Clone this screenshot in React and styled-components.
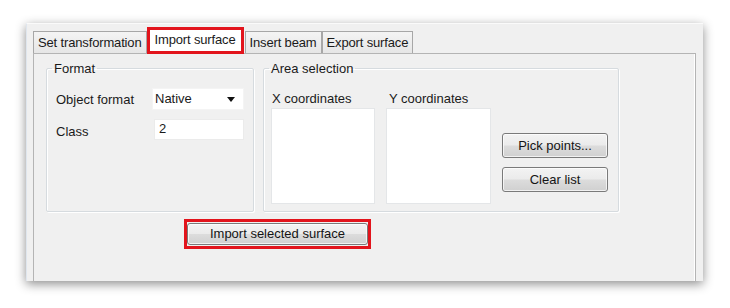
import React from 'react';
import styled, { createGlobalStyle } from 'styled-components';

const GlobalStyle = createGlobalStyle`
    html, body {
        margin: 0;
        padding: 0;
        background: #ffffff;
    }
    body {
        font-family: "Liberation Sans", Arial, sans-serif;
        font-size: 13px;
        color: #1a1a1a;
    }
`

const Stage = styled.div`
    width: 730px;
    height: 308px;
    padding: 23px 0 0 26px;
    box-sizing: border-box;
    overflow: hidden;
`

const Window = styled.div`
    width: 677px;
    height: 258px;
    box-sizing: border-box;
    padding: 3px 7px 0 6px;
    display: flex;
    flex-direction: column;
    background: #f0f0f0;
    border-top: 1px solid #fafafa;
    border-left: 1px solid #dfe6ee;
    box-shadow: 0 3px 10px rgba(0, 0, 0, 0.45);
    overflow: hidden;
`

const TabStrip = styled.div`
    display: flex;
    align-items: flex-end;
    height: 26px;
    padding-left: 0;
    position: relative;
    z-index: 1;
`

const Tab = styled.div`
    display: flex;
    align-items: center;
    box-sizing: border-box;
    letter-spacing: -0.15px;
    white-space: nowrap;
    height: ${p => p.$active ? '27px' : '22px'};
    padding: ${p => p.$active ? '0 5px 3px' : '0 4px 1px'};
    margin: ${p => p.$active ? '0 1px -1px 0' : '0'};
    border: ${p => p.$active ? '3px solid #e2141c' : '1px solid #a7a7a7'};
    border-bottom: ${p => p.$active ? '3px solid #e2141c' : 'none'};
    background: ${p => p.$active ? '#ffffff' : 'linear-gradient(#f4f4f4, #e6e6e6)'};
`

const Panel = styled.div`
    flex: 1;
    border: 1px solid #b4b4b4;
    border-bottom: none;
    box-shadow: inset -1px 0 0 #ffffff;
    padding: 7px 0 0 12px;
    display: flex;
    flex-direction: column;
`

const GroupRow = styled.div`
    display: flex;
    gap: 9px;
`

const GroupBox = styled.fieldset`
    margin: 0;
    min-width: 0;
    box-sizing: border-box;
    width: ${p => p.$width}px;
    height: 151px;
    padding: 0 0 0 ${p => p.$pad}px;
    border: 1px solid #d6dbdf;
    border-radius: 2px;
    box-shadow: inset 1px 1px 0 #ffffff, 1px 1px 0 #ffffff;
`

const Legend = styled.legend`
    padding: 0 2px;
    margin-left: ${p => p.$shift}px;
    line-height: 15px;
    font-size: 13px;
`

const FormGrid = styled.div`
    display: grid;
    grid-template-columns: 96px 92px;
    grid-template-rows: 22px 21px;
    row-gap: 9px;
    align-items: center;
    padding-top: 12px;
`

const FieldLabel = styled.span`
    line-height: 15px;
    padding-top: ${p => p.$low ? '4px' : '1px'};
`

const Select = styled.div`
    height: 22px;
    box-sizing: border-box;
    background: #ffffff;
    border: 1px solid #f4f4f4;
    display: flex;
    align-items: center;
    justify-content: space-between;
    padding: 0 8px 2px 2px;
`

const Caret = styled.span`
    width: 0;
    height: 0;
    border-left: 4px solid transparent;
    border-right: 4px solid transparent;
    border-top: 5px solid #111111;
    margin-top: 3px;
`

const TextInput = styled.div`
    height: 21px;
    margin-left: 2px;
    box-sizing: border-box;
    background: #ffffff;
    border: 1px solid #ebebeb;
    padding: 0 0 3px 4px;
    display: flex;
    align-items: center;
`

const AreaRow = styled.div`
    display: flex;
    align-items: flex-end;
    gap: 11px;
    padding-top: 15px;
`

const ListColumn = styled.div`
    display: flex;
    flex-direction: column;
    gap: 2px;
`

const ListLabel = styled.span`
    line-height: 15px;
    padding-left: ${p => p.$indent}px;
`

const ListBox = styled.div`
    width: ${p => p.$width}px;
    height: 96px;
    box-sizing: border-box;
    background: #ffffff;
    border: 1px solid #e4e6e8;
`

const ButtonColumn = styled.div`
    display: flex;
    flex-direction: column;
    gap: 9px;
    margin-bottom: 12px;
`

const Button = styled.button`
    font-family: "Liberation Sans", Arial, sans-serif;
    font-size: 13px;
    color: #141414;
    width: ${p => p.$width}px;
    height: ${p => p.$height}px;
    padding: 0 0 1px;
    box-sizing: border-box;
    border: 1px solid #7a7a7a;
    border-radius: 3px;
    background: linear-gradient(#f3f3f3 0%, #ebebeb 48%, #dcdcdc 52%, #d0d0d0 100%);
    box-shadow: inset 0 0 0 1px rgba(255, 255, 255, 0.7);
`

const Highlight = styled.div`
    align-self: flex-start;
    margin: 7px 0 0 138px;
    padding: 1px 0;
    border: 3px solid #e2141c;
    display: flex;
`

const App = () => {
    const tabs = ['Set transformation', 'Import surface', 'Insert beam', 'Export surface']

    return (
        <Stage>
            <GlobalStyle />
            <Window>
                <TabStrip>
                    {tabs.map((name, index) => (
                        <Tab key={index} $active={index === 1}>{name}</Tab>
                    ))}
                </TabStrip>
                <Panel>
                    <GroupRow>
                        <GroupBox $width={208} $pad={9}>
                            <Legend $shift={-4}>Format</Legend>
                            <FormGrid>
                                <FieldLabel>Object format</FieldLabel>
                                <Select>
                                    <span>Native</span>
                                    <Caret />
                                </Select>
                                <FieldLabel $low>Class</FieldLabel>
                                <TextInput>2</TextInput>
                            </FormGrid>
                        </GroupBox>
                        <GroupBox $width={356} $pad={7}>
                            <Legend $shift={-2}>Area selection</Legend>
                            <AreaRow>
                                <ListColumn>
                                    <ListLabel $indent={1}>X coordinates</ListLabel>
                                    <ListBox $width={104} />
                                </ListColumn>
                                <ListColumn>
                                    <ListLabel $indent={3}>Y coordinates</ListLabel>
                                    <ListBox $width={105} />
                                </ListColumn>
                                <ButtonColumn>
                                    <Button $width={106} $height={25}>Pick points...</Button>
                                    <Button $width={106} $height={25}>Clear list</Button>
                                </ButtonColumn>
                            </AreaRow>
                        </GroupBox>
                    </GroupRow>
                    <Highlight>
                        <Button $width={181} $height={22}>Import selected surface</Button>
                    </Highlight>
                </Panel>
            </Window>
        </Stage>
    )
}

export default App
